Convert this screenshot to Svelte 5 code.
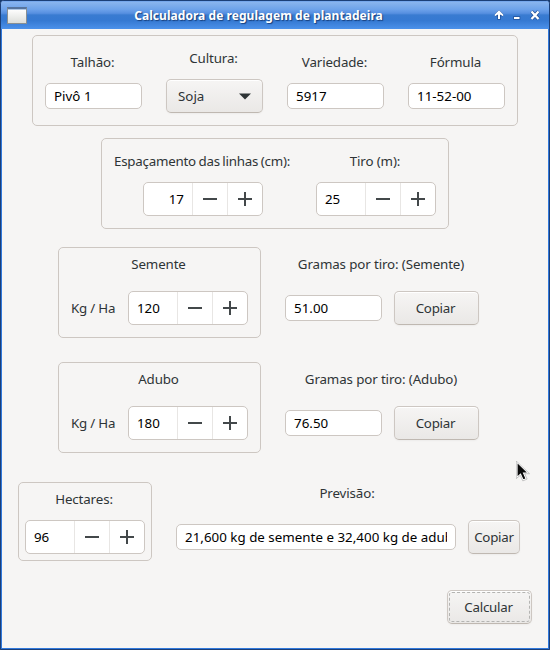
<script>
  let field = $state({ plot: 'Pivô 1', variety: '5917', formula: '11-52-00' });
  let doses = [
    { name: 'Semente', kg: '120', grams: '51.00' },
    { name: 'Adubo', kg: '180', grams: '76.50' }
  ];
  let forecast = '21,600 kg de semente e 32,400 kg de adubo';
</script>

{#snippet spin(value, right = false)}
  <div class="spin">
    <span class="value" class:right>{value}</span>
    <span class="step"><svg width="14" height="14"><path d="M0 6h14v2H0z" /></svg></span>
    <span class="step"><svg width="14" height="14"><path d="M0 6h14v2H0zM6 0h2v14H6z" /></svg></span>
  </div>
{/snippet}

{#snippet entry(label, value)}
  <div class="col">
    <span class="label">{label}</span>
    <div class="entry"><span>{value}</span></div>
  </div>
{/snippet}

<div class="window">
  <header>
    <span class="app-icon"></span>
    <h1>Calculadora de regulagem de plantadeira</h1>
    <svg class="controls" width="48" height="14" viewBox="0 0 48 14">
      <g class="shade">
        <path d="M7 2L3.500 5.500v1H6v3.500h2V6.500h2.500v-1z" />
        <path d="M22 8h5.500v2H22z" />
        <path d="M39.500 2.500l7 7.500M46.500 2.500l-7 7.500" />
      </g>
      <path d="M7 1.300L2.800 5.500v1.700L6 5.600V10h2V5.600l3.200 1.600V5.500z" fill="#fff" />
      <path d="M22 8h5.500v2H22z" fill="#fff" />
      <path d="M39.500 2.500l7 7.500M46.500 2.500l-7 7.500" stroke="#fff" stroke-width="2.300" />
    </svg>
  </header>

  <main>
    <section class="frame identity">
      {@render entry('Talhão:', field.plot)}
      <div class="col culture">
        <span class="label">Cultura:</span>
        <div class="button combo">
          <span>Soja</span>
          <svg width="12" height="7"><path d="M0 .5h12L6 6.500z" /></svg>
        </div>
      </div>
      {@render entry('Variedade:', field.variety)}
      {@render entry('Fórmula', field.formula)}
    </section>

    <section class="frame spacing">
      <div class="col">
        <span class="label tight">Espaçamento das linhas (cm):</span>
        {@render spin('17', true)}
      </div>
      <div class="col">
        <span class="label">Tiro (m):</span>
        {@render spin('25')}
      </div>
    </section>

    {#each doses as dose}
      <section class="dose">
        <div class="frame dose-box">
          <span class="label">{dose.name}</span>
          <div class="dose-row">
            <span class="label">Kg / Ha</span>
            {@render spin(dose.kg)}
          </div>
        </div>
        <div class="result">
          <span class="label">Gramas por tiro: ({dose.name})</span>
          <div class="result-row">
            <div class="entry"><span>{dose.grams}</span></div>
            <div class="button wide">Copiar</div>
          </div>
        </div>
      </section>
    {/each}

    <section class="totals">
      <div class="frame hectares">
        <span class="label">Hectares:</span>
        {@render spin('96')}
      </div>
      <div class="forecast">
        <span class="label">Previsão:</span>
        <div class="forecast-row">
          <div class="entry long"><span>{forecast}</span></div>
          <div class="button small">Copiar</div>
        </div>
      </div>
    </section>

    <div class="button wide calculate"><span class="focus">Calcular</span></div>
  </main>

  <svg class="cursor" width="14" height="21" viewBox="0 0 14 21">
    <path d="M1 1v15.500l3.500-3.200 2.600 5.700 3-1.300-2.500-5.600h4.700z" fill="#0a0a0a" stroke="#fff" stroke-width="1.200" />
    <path d="M.3 0v17.500l4-3.200 2.500 5.600 4.300-1.800-2.400-5.400h4.800z" fill="none" stroke="#777" stroke-width=".4" />
  </svg>
</div>

<style>
  :global(body) { margin: 0; background: #173a6e; }
  .window, .window * { box-sizing: border-box; }
  .window {
    position: relative;
    width: 550px;
    height: 650px;
    border: 1px solid #1b3f78;
    border-radius: 4px 4px 0 0;
    background: #f6f5f4;
    box-shadow: inset 0 0 0 1px #3079dc;
    overflow: hidden;
    font: 13.333px/18px 'Noto Sans', sans-serif;
    color: #2e3436;
  }
  header {
    display: flex;
    align-items: center;
    height: 28px;
    padding: 0 9px 0 6px;
    background: linear-gradient(#8db7ef 0, #6da2ea 30%, #568fe0 44%, #397bd1 50%, #3579d2 70%, #4b91ea 100%);
    box-shadow: inset 0 1px #76a8ed;
  }
  .app-icon {
    width: 20px;
    height: 17px;
    border: 1px solid #888f93;
    border-top: 2px solid #56749e;
    background: linear-gradient(#fff, #dcdeda);
    box-shadow: inset 0 1px #afc7e4;
  }
  h1 {
    flex: 1;
    margin: 1px 0 0;
    padding-right: 2px;
    text-align: center;
    font-size: 12px;
    line-height: 18px;
    font-weight: 700;
    letter-spacing: .05px;
    color: #fff;
    text-shadow: 1px 1px 1px #173f7c;
  }
  .controls { margin-top: 2px; }
  .shade path { fill: #235199; stroke: #235199; stroke-width: 1.500; }
  .shade path:last-child { stroke-width: 3.800; }
  main { display: flex; flex-direction: column; align-items: flex-start; }
  .frame { border: 1px solid #cdc7c2; border-radius: 5px; }
  .col { display: flex; flex-direction: column; align-items: center; }
  .label { white-space: pre; text-align: center; letter-spacing: -.12px; padding-right: 2px; }
  .label.tight { letter-spacing: -.22px; word-spacing: -.75px; }
  .identity {
    display: flex;
    gap: 24px;
    width: 486px;
    height: 91px;
    margin: 6px 0 0 31px;
    padding: 17px 12px 0;
  }
  .identity .col { gap: 12px; }
  .identity .culture { margin-top: -4px; }
  .entry {
    width: 97px;
    height: 26px;
    padding: 3px 8px;
    border: 1px solid #cdc7c2;
    border-radius: 5px;
    background: #fff;
    color: #000;
    letter-spacing: .02px;
  }
  .entry span { display: block; overflow: hidden; white-space: pre; }
  .button {
    display: flex;
    align-items: center;
    justify-content: center;
    height: 34px;
    border: 1px solid #cdc7c2;
    border-bottom-color: #bfb8b1;
    border-radius: 5px;
    background: linear-gradient(#f6f5f4, #eae8e6);
    box-shadow: inset 0 1px #fff, 0 1px 2px #0000000a;
    letter-spacing: -.25px;
  }
  .combo { width: 97px; justify-content: space-between; padding: 0 11px; letter-spacing: 0; }
  .combo svg { fill: #2e3436; }
  .spacing {
    display: flex;
    width: 348px;
    height: 91px;
    margin: 12px 0 0 100px;
    padding: 13px 12px 0;
    justify-content: space-between;
  }
  .spacing .col { gap: 12px; }
  .spacing .col:first-child { width: 178px; }
  .spin {
    display: flex;
    width: 120px;
    height: 34px;
    border: 1px solid #cdc7c2;
    border-radius: 5px;
    background: #fff;
    color: #000;
    line-height: 32px;
  }
  .value { flex: 1; padding: 0 8px; }
  .value.right { text-align: right; }
  .step {
    display: flex;
    align-items: center;
    justify-content: center;
    width: 35px;
    border-left: 1px solid #e8e6e4;
  }
  .step svg { fill: #43484a; }
  .dose { display: flex; gap: 24px; margin: 18px 0 0 57px; }
  .dose + .dose { margin-top: 24px; }
  .dose-box {
    display: flex;
    flex-direction: column;
    width: 203px;
    height: 91px;
    padding: 7px 12px 0;
    gap: 18px;
  }
  .dose-row { display: flex; align-items: center; justify-content: space-between; }
  .dose-row .label { padding: 0; letter-spacing: -.2px; }
  .result { display: flex; flex-direction: column; gap: 18px; padding-top: 8px; }
  .result-row, .forecast-row { display: flex; align-items: center; gap: 12px; }
  .wide { width: 85px; }
  .result .wide { padding-right: 2px; }
  .totals { display: flex; gap: 24px; margin: 29px 0 0 17px; }
  .hectares {
    display: flex;
    flex-direction: column;
    width: 134px;
    height: 79px;
    padding: 7px 6px 0;
    gap: 12px;
  }
  .forecast { display: flex; flex-direction: column; gap: 18px; padding-top: 2px; }
  .long { width: 280px; }
  .small { width: 52px; }
  .calculate { align-self: flex-end; margin: 29px 17px 0 0; }
  .focus {
    width: 81px;
    height: 30px;
    padding-right: 2px;
    border: 1px dashed #b4b4b2;
    border-radius: 3px;
    text-align: center;
    line-height: 28px;
  }
  .cursor { position: absolute; left: 515px; top: 460px; }
</style>
